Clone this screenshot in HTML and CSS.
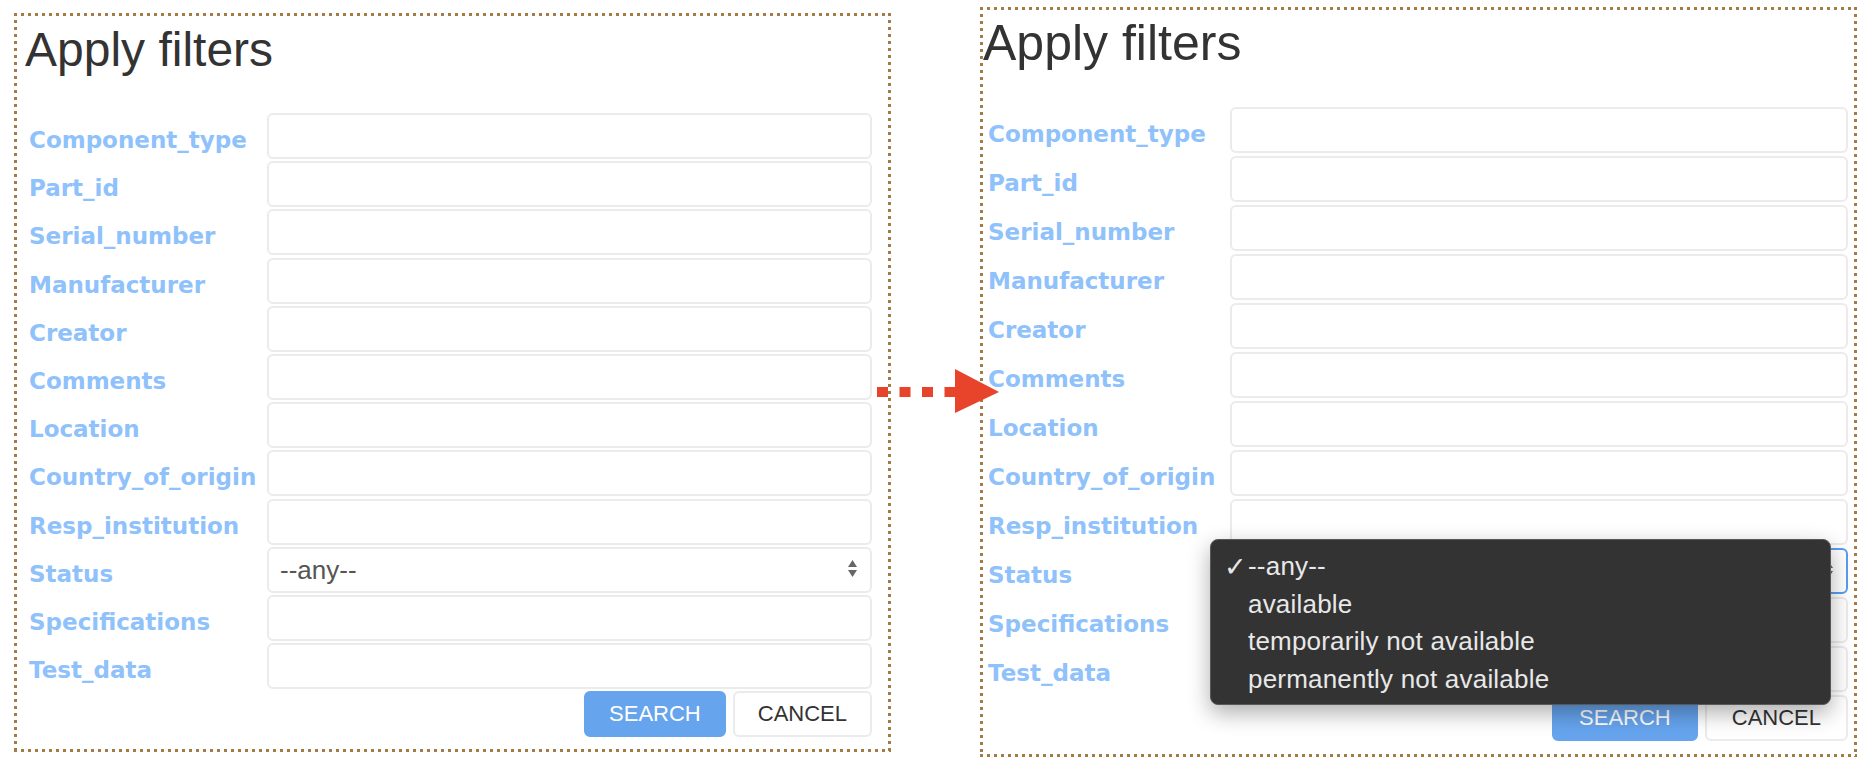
FILE: index.html
```html
<!DOCTYPE html>
<html lang="en">
<head>
<meta charset="utf-8">
<meta name="viewport" content="width=device-width,initial-scale=1">
<title>Apply filters – before / after</title>
<link rel="stylesheet" href="styles.css">
</head>

<body>
<div class="stage">

  <!-- LEFT: form at rest -->
  <section class="panel panel-a">
    <h1>Apply filters</h1>
    <form class="filters">
      <label>Component_type</label><input class="field" type="text">
      <label>Part_id</label><input class="field" type="text">
      <label>Serial_number</label><input class="field" type="text">
      <label>Manufacturer</label><input class="field" type="text">
      <label>Creator</label><input class="field" type="text">
      <label>Comments</label><input class="field" type="text">
      <label>Location</label><input class="field" type="text">
      <label>Country_of_origin</label><input class="field" type="text">
      <label>Resp_institution</label><input class="field" type="text">
      <label>Status</label>
      <div class="select-wrap">
        <select class="field">
          <option>--any--</option>
          <option>available</option>
          <option>temporarily not available</option>
          <option>permanently not available</option>
        </select>
        <svg class="updown" width="9" height="17" viewBox="0 0 9 17"><polygon points="4.5,0 9,7 0,7"/><polygon points="0,10 9,10 4.5,17"/></svg>
      </div>
      <label>Specifications</label><input class="field" type="text">
      <label>Test_data</label><input class="field" type="text">
      <div class="actions">
        <button type="button" class="btn primary">SEARCH</button>
        <button type="button" class="btn">CANCEL</button>
      </div>
    </form>
  </section>

  <!-- dotted arrow between the two shots -->
  <svg class="arrow" width="122" height="44" viewBox="0 0 122 44">
    <line x1="0" y1="23" x2="78" y2="23" stroke-width="10" stroke-dasharray="11 11.5"/>
    <polygon points="78,0 122,23 78,44"/>
  </svg>

  <!-- RIGHT: status dropdown opened -->
  <section class="panel panel-b">
    <h1>Apply filters</h1>
    <form class="filters">
      <label>Component_type</label><input class="field" type="text">
      <label>Part_id</label><input class="field" type="text">
      <label>Serial_number</label><input class="field" type="text">
      <label>Manufacturer</label><input class="field" type="text">
      <label>Creator</label><input class="field" type="text">
      <label>Comments</label><input class="field" type="text">
      <label>Location</label><input class="field" type="text">
      <label>Country_of_origin</label><input class="field" type="text">
      <label>Resp_institution</label><input class="field" type="text">
      <label>Status</label>
      <div class="select-wrap">
        <select class="field focus">
          <option>--any--</option>
        </select>
        <svg class="updown" width="9" height="17" viewBox="0 0 9 17"><polygon points="4.5,0 9,7 0,7"/><polygon points="0,10 9,10 4.5,17"/></svg>
        <ul class="menu">
          <li class="checked">--any--</li>
          <li>available</li>
          <li>temporarily not available</li>
          <li>permanently not available</li>
        </ul>
      </div>
      <label>Specifications</label><input class="field" type="text">
      <label>Test_data</label><input class="field" type="text">
      <div class="actions">
        <button type="button" class="btn primary">SEARCH</button>
        <button type="button" class="btn">CANCEL</button>
      </div>
    </form>
  </section>

</div>
</body>
</html>
```

FILE: styles.css
```css
:root{
  --dots:#a57b45;
  --label:#8fc1fb;
  --line:#ebebeb;
  --blue:#66a4ee;
  --focus:#5b9bef;
  --arrow:#e8432b;
}
*{box-sizing:border-box;margin:0;padding:0}
body{font-family:"Liberation Sans",Arial,sans-serif;background:#fff;color:#333}

/* ---------- STAGE ---------- */
.stage{display:flex;align-items:flex-start;gap:89px;padding:7px 0 0 14px;position:relative}
.arrow{position:absolute;left:877px;top:369px}
.arrow line{stroke:var(--arrow)}
.arrow polygon{fill:var(--arrow)}

/* ---------- PANELS (square dotted frame) ---------- */
.panel{
  width:877px;border:3px solid transparent;background-origin:border-box;
  background:
    repeating-linear-gradient(90deg,var(--dots) 0 3px,transparent 3px 7px) left top/100% 3px no-repeat border-box,
    repeating-linear-gradient(90deg,var(--dots) 0 3px,transparent 3px 7px) left bottom/100% 3px no-repeat border-box,
    repeating-linear-gradient(180deg,var(--dots) 0 3px,transparent 3px 7px) left top/3px 100% no-repeat border-box,
    repeating-linear-gradient(180deg,var(--dots) 0 3px,transparent 3px 7px) right top/3px 100% no-repeat border-box,
    #fff;
}
.panel h1{font-weight:400;color:#333}
.panel-a{margin-top:6px;padding:0 16px 12px 8px;--gap:2.2px;--lbl:238px;--indent:4px;--btn-pad:23px}
.panel-a h1{font-size:48px;line-height:55px;margin:6px 0 36px}
.panel-b{padding:0 6px 13px 0;--gap:3px;--lbl:242px;--indent:5px;--btn-pad:25px}
.panel-b h1{font-size:50px;line-height:57px;margin:5px 0 35px}

/* ---------- FORM ---------- */
.filters{display:grid;grid-template-columns:var(--lbl) 1fr;row-gap:var(--gap);padding-left:var(--indent)}
.filters label{font:700 23px/26px "DejaVu Sans",Verdana,sans-serif;color:var(--label);padding-top:14px;white-space:nowrap}
.field{
  display:block;width:100%;height:46px;background:#fff;
  border:2px solid var(--line);border-radius:6px;outline:none;
  font:26px "Liberation Sans",Arial,sans-serif;color:#555;padding:0 11px
}
select.field{appearance:none;-webkit-appearance:none}
select.field.focus{border-color:var(--focus)}
.select-wrap{position:relative}
.updown{position:absolute;right:15px;top:13px;fill:#666}

/* ---------- BUTTONS ---------- */
.actions{grid-column:1/-1;display:flex;justify-content:flex-end;gap:7px}
.btn{
  height:46px;padding:0 var(--btn-pad);border-radius:6px;cursor:pointer;
  font:22px "Liberation Sans",Arial,sans-serif;
  background:#fff;color:#333;border:2px solid var(--line)
}
.btn.primary{background:var(--blue);border-color:var(--blue);color:#fff}

/* ---------- OPEN DROPDOWN ---------- */
.menu{
  position:absolute;left:-20px;top:-9px;width:621px;z-index:2;
  list-style:none;background:#333;border:1px solid #595959;border-radius:8px;
  box-shadow:0 8px 22px rgba(0,0,0,.32);padding:8px 0 6px
}
.menu li{position:relative;font:26px/37.5px "Liberation Sans",Arial,sans-serif;color:#e8e8e8;padding-left:37px;letter-spacing:.2px}
.menu li.checked:before{content:"✓";position:absolute;left:13px;font-family:"DejaVu Sans",sans-serif;font-size:27px}
```
